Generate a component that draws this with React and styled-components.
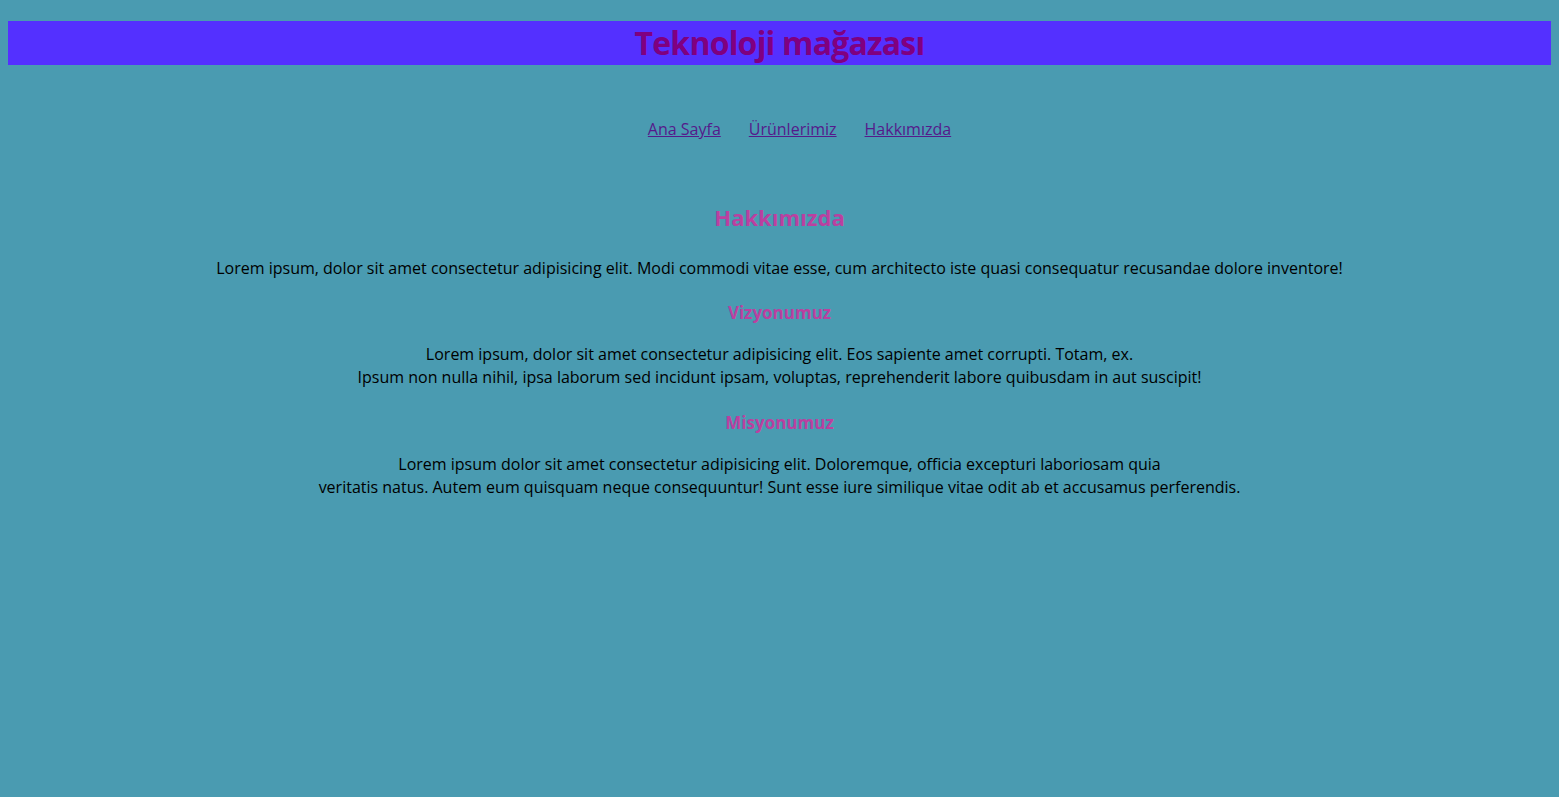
import React from "react";
import styled, { createGlobalStyle } from "styled-components";

const Global = createGlobalStyle`
  html, body { margin: 0; padding: 0; }
  body {
    background: #4a9bb1;
    font-family: "Open Sans", "DejaVu Sans", sans-serif;
    color: #000;
  }
`;

const Page = styled.div`
  padding: 21px 8px 40px;
`;

const Header = styled.header`
  background: #5430ff;
  height: 44px;
  display: flex;
  align-items: center;
  justify-content: center;
`;

const Title = styled.h1`
  margin: 0;
  font-size: 32px;
  line-height: 44px;
  font-weight: 700;
  letter-spacing: -0.8px;
  color: #800080;
`;

const Nav = styled.nav`
  display: flex;
  justify-content: center;
  gap: 28px;
  margin-top: 53px;
  padding-left: 40px;
`;

const NavLink = styled.a`
  font-size: 16px;
  line-height: 22px;
  color: #551a8b;
  text-decoration: underline;
`;

const Main = styled.main`
  display: flex;
  flex-direction: column;
  align-items: center;
  text-align: center;
  margin-top: 60px;
`;

const Heading = styled.h2`
  margin: 0 0 ${(p) => p.$after}px;
  font-size: ${(p) => p.$size}px;
  line-height: ${(p) => p.$lh}px;
  font-weight: 700;
  color: #bb40a0;
`;

const Text = styled.p`
  margin: 0 0 ${(p) => p.$after}px;
  font-size: 16px;
  line-height: 23px;
`;

export default function App() {
  return (
    <>
      <Global />
      <Page>
        <Header>
          <Title>Teknoloji mağazası</Title>
        </Header>
        <Nav>
          <NavLink href="#">Ana Sayfa</NavLink>
          <NavLink href="#">Ürünlerimiz</NavLink>
          <NavLink href="#">Hakkımızda</NavLink>
        </Nav>
        <Main>
          <Heading $size={22} $lh={34} $after={23}>Hakkımızda</Heading>
          <Text $after={20}>
            Lorem ipsum, dolor sit amet consectetur adipisicing elit. Modi commodi vitae esse, cum architecto iste quasi consequatur recusandae dolore inventore!
          </Text>
          <Heading as="h3" $size={17} $lh={26} $after={17}>Vizyonumuz</Heading>
          <Text $after={21}>
            Lorem ipsum, dolor sit amet consectetur adipisicing elit. Eos sapiente amet corrupti. Totam, ex.
            <br />
            Ipsum non nulla nihil, ipsa laborum sed incidunt ipsam, voluptas, reprehenderit labore quibusdam in aut suscipit!
          </Text>
          <Heading as="h3" $size={17} $lh={26} $after={17}>Misyonumuz</Heading>
          <Text $after={0}>
            Lorem ipsum dolor sit amet consectetur adipisicing elit. Doloremque, officia excepturi laboriosam quia
            <br />
            veritatis natus. Autem eum quisquam neque consequuntur! Sunt esse iure similique vitae odit ab et accusamus perferendis.
          </Text>
        </Main>
      </Page>
    </>
  );
}
